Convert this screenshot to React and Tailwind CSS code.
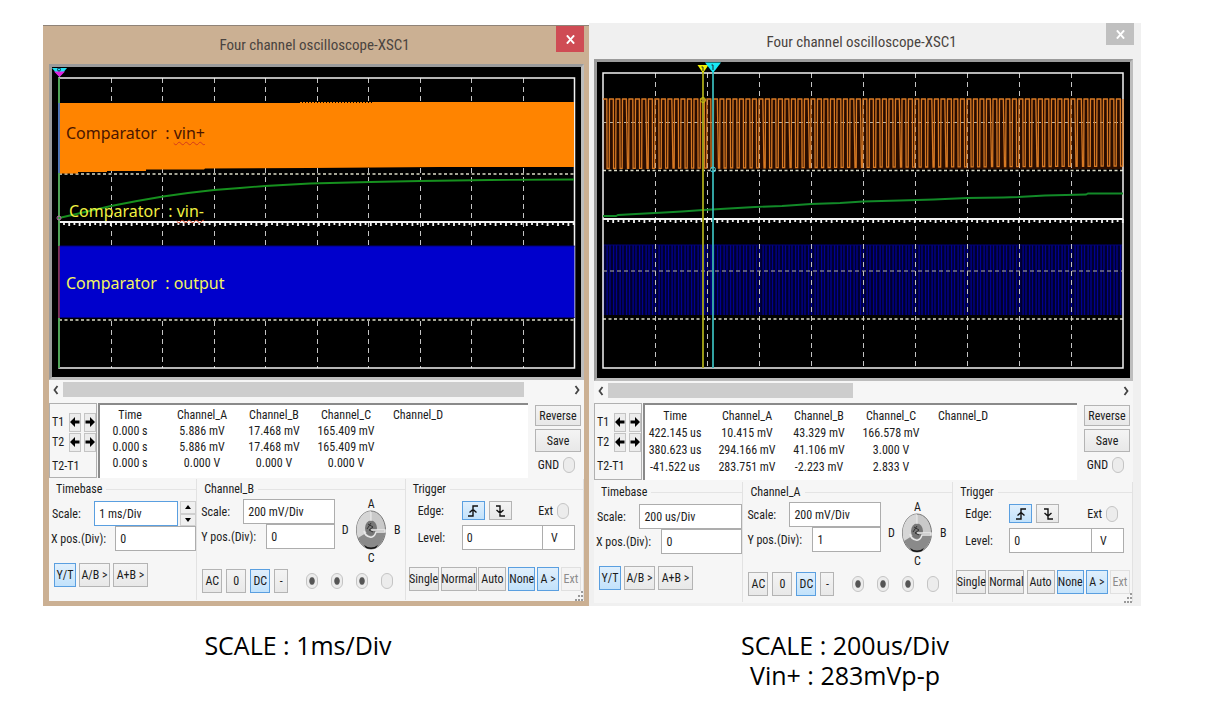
import React, { useId } from "react";

const UI = "font-['Roboto_Condensed','Open_Sans_Condensed','Noto_Sans_Condensed','Lato',sans-serif]";
const LABEL = "font-['Noto_Sans','Noto_Sans_CJK_KR',sans-serif]";
const CAPTION = "font-['Open_Sans','Noto_Sans_CJK_KR',sans-serif]";

function cx(...parts) {
  return parts.filter(Boolean).join(" ");
}

function Btn({ children, active, disabled, className, ...rest }) {
  return (
    <button
      type="button"
      disabled={disabled}
      className={cx(
        "flex h-6 shrink-0 items-center justify-center whitespace-nowrap border",
        active
          ? "border-[#5a9fe0] bg-linear-to-b from-[#e0effc] to-[#c2e2fb]"
          : disabled
            ? "border-[#e0e0e0] bg-[#f4f4f4] text-[#8c8c8c]"
            : "border-[#b4b4b4] bg-linear-to-b from-[#f4f4f4] to-[#e8e8e8]",
        className
      )}
      {...rest}
    >
      {children}
    </button>
  );
}

function Radio({ label, name, dot, className }) {
  return (
    <label className={cx("flex items-center gap-1", className)}>
      {label}
      <input
        type="radio"
        name={name}
        aria-label={label ? undefined : name}
        className={cx(
          "h-4 w-3 appearance-none rounded-full border border-[#c4c4c4]",
          dot
            ? "bg-[radial-gradient(ellipse_at_center,#555_0_32%,#ececec_45%)]"
            : "bg-[#ececec]"
        )}
      />
    </label>
  );
}

function Arrow({ left }) {
  return (
    <svg viewBox="0 0 10 12" className="h-3 w-[10px]" fill="#000">
      <path d={left ? "M0 6 5 1v3.5h4.5v3H5V11z" : "M10 6 5 1v3.5H.5v3H5V11z"} />
    </svg>
  );
}

function Edge({ falling }) {
  return (
    <svg viewBox="0 0 14 14" className="h-[14px] w-[14px]" fill="none" stroke="#111" strokeWidth="1.4">
      {falling ? (
        <path d="M3 2h4v10h5M3.500 6 7 9l3.500-3" />
      ) : (
        <path d="M2 12h5V2h5M3.500 8.500 7 5.500l3.500 3" />
      )}
    </svg>
  );
}

function Knob() {
  return (
    <svg viewBox="0 0 32 42" className="h-[42px] w-8">
      <ellipse cx="16" cy="21" rx="14.500" ry="19" fill="#c9c9c9" stroke="#777" />
      <path d="M16 2a14.500 19 0 0 0-13 27l13-8z" fill="#d6d6d6" />
      <path d="M3 29a14.500 19 0 0 0 27-4l1-4H16z" fill="#8a8a8a" />
      <path d="M9 36q7 5 14 0l-2 3q-5 2-10 0z" fill="#111" />
      <ellipse cx="16" cy="19" rx="6" ry="7.500" fill="#777" />
      <path d="M16 21h14v2H21q-2 6-6 5-5-1-6-6" fill="none" stroke="#e9e9e9" strokeWidth="1.500" />
      <path d="M13 15l5 3-4 3 4 2M12 20l4-6" stroke="#333" fill="none" />
      <path d="M16 3v9" stroke="#eee" />
    </svg>
  );
}

function Grip() {
  return (
    <svg viewBox="0 0 10 10" className="absolute right-0 bottom-0 h-[10px] w-[10px]" fill="#9a9a9a">
      <path d="M7 0h2v2H7zM4 4h2v2H4zM7 4h2v2H7zM1 8h2v2H1zM4 8h2v2H4zM7 8h2v2H7z" />
    </svg>
  );
}

function ticks(x0, x1, y) {
  let d = "";
  for (let i = 0, x = x0 + 5; x < x1; i++, x += 5.2) d += `M${x.toFixed(1)} ${y}v${i % 2 ? 4 : 3}`;
  return d;
}

function Grid({ x0, x1, y0, y1, mid, rows }) {
  const step = (x1 - x0) / 10;
  return (
    <g fill="none" stroke="#f2f2f2">
      {[1, 2, 3, 4, 5, 6, 7, 8, 9].map((i) => (
        <path key={i} d={`M${Math.round(x0 + i * step) + 0.5} ${y0}V${y1}`} strokeDasharray="5 4" stroke="#c4c4c4" />
      ))}
      {rows.map((y) => (
        <path key={y} d={`M${x0} ${y}H${x1}`} strokeDasharray="3 2.500" strokeWidth="1.300" stroke="#dcdcc8" />
      ))}
      <path d={`M${x0} ${mid}H${x1}`} strokeWidth="2" />
      <path d={ticks(x0, x1, mid)} strokeWidth="1.800" />
      <path d={`M${x0} ${y0}H${x1}V${y1}H${x0}z`} strokeWidth="1.500" />
    </g>
  );
}

function SlowTrace() {
  return (
    <svg viewBox="52 67 529 310" preserveAspectRatio="none" className="block h-[310px] w-full bg-black">
      <Grid x0={59} x1={574.5} y0={78} y1={368} mid={222} rows={[174, 320]} />
      <path d="M59 103H300V102H574V167H440L310 168 205 168.500 204 169.500H146V171H107V172H78V173.500H59z" fill="#ff8400" />
      <path d="M302 102.500H374" stroke="#000" strokeWidth="1" strokeDasharray="1 2" />
      <path d="M59 246H574.500V318H59z" fill="#0000cc" />
      <path d="M59 246H574.500M59 317.500H574.500" stroke="#00007a" />
      <path d="M59 218L85 212 111 206 137 201 163 196.500 188 193 214 190 240 188 265 186 310 183.500 370 182 420 181 490 180 574 179.500" fill="none" stroke="#16901e" strokeWidth="1.800" />
      <path d="M59 78V368" stroke="#2f9e3a" strokeWidth="1.500" />
      <path d="M59 103V173" stroke="#5068d8" strokeWidth="1.500" />
      <path d="M59 246V318" stroke="#8c1060" strokeWidth="1.500" />
      <path d="M52 68H67L59.500 77z" fill="#22e0f4" />
      <path d="M54 71.500H65L59.500 77z" fill="#e020e0" />
      <circle cx="59" cy="69.500" r="1.500" fill="none" stroke="#124" />
      <circle cx="59" cy="218" r="2" fill="none" stroke="#c070b0" />
    </svg>
  );
}

function squareWave() {
  let d = "M603 99";
  for (let i = 0; i < 80; i++) {
    const x = 603 + i * 6.5;
    const low = 168.5 - i * 0.03;
    const slant = i % 7 === 3 || i % 11 === 6 ? 1.2 : 0.3;
    d += `H${(x + 3.8).toFixed(1)}L${(x + 3.8 + slant).toFixed(1)} ${low.toFixed(1)}H${(x + 6.2).toFixed(1)}L${(x + 6.5).toFixed(1)} 99`;
  }
  return d;
}

function stripes() {
  let d = "";
  for (let i = 0; i < 80; i++) {
    const x = 603.5 + i * 6.5;
    d += `M${x.toFixed(1)} 245V315M${(x + 3.6).toFixed(1)} 245V315`;
  }
  return d;
}

function FastTrace() {
  return (
    <svg viewBox="597 62 533 316" preserveAspectRatio="none" className="block h-[316px] w-full bg-black">
      <path d="M603 99H1123V169H603z" fill="#2a0d00" />
      <path d="M603 245H1123V315H603z" fill="#00002c" />
      <path d={stripes()} stroke="#000090" strokeWidth="1.300" />
      <path d="M603 245H1123" stroke="#000078" />
      <Grid x0={603} x1={1123} y0={73} y1={368} mid={219} rows={[170.5, 319]} />
      <path d="M603 122.500H1123M603 271H1123" stroke="#b9b4a8" strokeDasharray="4 3" />
      <path d={squareWave()} fill="none" stroke="#d87a24" strokeWidth="1.300" />
      <path d="M603 216H616L618 215 636 214 655 213 682 211.500 703 210 755 207 782 206 811 204 840 203 863 201.500 900 200.500 934 199.500 967 198 1003 197.500 1018 197 1045 195.500 1086 194.500 1088 193.500H1123" fill="none" stroke="#128a28" strokeWidth="1.800" />
      <path d="M703 72V368" stroke="#a8a818" strokeWidth="1.800" />
      <path d="M713 72V368" stroke="#38b4b4" strokeWidth="1.800" />
      <path d="M697.500 65H708.500L703 73z" fill="#f2f200" />
      <path d="M705 62.500H721L713 73z" fill="#18e8f4" />
      <path d="M701.500 67H703V71M711.500 65H713V70" fill="none" stroke="#223" />
      <circle cx="703" cy="100" r="2.500" fill="none" stroke="#c0c010" />
      <circle cx="713" cy="169.500" r="2.500" fill="none" stroke="#40c8d8" />
    </svg>
  );
}

function Chevron({ left }) {
  return (
    <svg viewBox="0 0 6 10" className="h-[10px] w-[6px]" fill="none" stroke="#444" strokeWidth="1.800">
      <path d={left ? "M4.500 1 1.500 5l3 4" : "M1.500 1l3 4-3 4"} />
    </svg>
  );
}

function Field({ label, value, inputClass, className, spinner, focused }) {
  const id = useId();
  return (
    <div className={cx("flex h-[25px] items-center", className)}>
      <label htmlFor={id} className="min-w-0 flex-1 whitespace-nowrap">{label}</label>
      <input
        id={id}
        defaultValue={value}
        className={cx(
          "h-full shrink-0 border bg-white pl-1 outline-none",
          focused ? "border-[#5a9fe0]" : "border-[#adadad]",
          inputClass
        )}
      />
      {spinner && (
        <span className="flex h-full w-[18px] shrink-0 flex-col pl-[2px]">
          <button type="button" aria-label="Increase" className="flex flex-1 items-center justify-center border border-[#cfcfcf] bg-[#f0f0f0]">
            <svg viewBox="0 0 6 4" className="h-1 w-[6px]"><path d="M0 4 3 0l3 4z" /></svg>
          </button>
          <button type="button" aria-label="Decrease" className="flex flex-1 items-center justify-center border border-[#cfcfcf] bg-[#f0f0f0]">
            <svg viewBox="0 0 6 4" className="h-1 w-[6px]"><path d="M0 0 3 4l3-4z" /></svg>
          </button>
        </span>
      )}
    </div>
  );
}

const HEADS = ["Time", "Channel_A", "Channel_B", "Channel_C", "Channel_D"];

function Readout({ rows, roomy }) {
  return (
    <div className={cx("flex", roomy ? "mt-[5px] h-[77px]" : "mt-[6px] h-[75px]")}>
      <div className="flex w-12 shrink-0 flex-col border border-[#b0b0b0] pt-2 pl-[2px] leading-[16px]">
        {["T1", "T2"].map((t) => (
          <div key={t} className="flex h-5 items-center gap-[3px]">
            <span className="w-[15px]">{t}</span>
            <button type="button" aria-label={`${t} left`} className="flex h-[19px] w-3 items-center justify-center border border-[#c4c4c4] bg-[#ececec]">
              <Arrow left />
            </button>
            <button type="button" aria-label={`${t} right`} className="flex h-[19px] w-3 items-center justify-center border border-[#c4c4c4] bg-[#ececec]">
              <Arrow />
            </button>
          </div>
        ))}
        <span className="mt-[6px]">T2-T1</span>
      </div>
      <div className="ml-px min-w-0 flex-1 border-t-2 border-l-2 border-[#8a8a8a] bg-white pt-[2px]">
        <table className="w-[354px] table-fixed border-collapse text-center">
          <colgroup>
            <col className="w-[66px]" />
            <col /><col /><col /><col />
          </colgroup>
          <thead>
            <tr className={roomy ? "h-[17px]" : "h-4"}>
              {HEADS.map((h) => (
                <th key={h} scope="col" className="p-0 leading-[16px] font-normal first:pr-[6px]">{h}</th>
              ))}
            </tr>
          </thead>
          <tbody>
            {rows.map((r, i) => (
              <tr key={i} className={roomy ? "h-[17px]" : "h-4"}>
                {r.map((c, j) => (
                  <td key={j} className="p-0 leading-[16px] first:pr-[6px]">{c}</td>
                ))}
                <td className="p-0" />
              </tr>
            ))}
          </tbody>
        </table>
      </div>
      <div className="flex w-[56px] shrink-0 flex-col items-end gap-[3px] pt-[2px] pr-[3px]">
        <Btn className="h-[21px] w-[46px]">Reverse</Btn>
        <Btn className="h-[23px] w-[46px]">Save</Btn>
        <Radio label="GND" name="gnd" className="mt-px pr-[6px]" />
      </div>
    </div>
  );
}

function Group({ title, children }) {
  return (
    <section className="min-w-0 border-r border-[#e2e2e2]">
      <h2 className="flex h-5 items-center gap-1 pl-[7px] leading-[20px]">
        {title}
        <span className="h-px flex-1 bg-[#e4e4e4]" />
      </h2>
      {children}
    </section>
  );
}

function Controls({ roomy, channel, timeScale, yPos, id }) {
  return (
    <div className={cx("grid grid-cols-[148fr_208fr_178fr]", roomy ? "mt-[2px] h-[120px]" : "mt-px h-[121px]")}>
      <Group title="Timebase">
        <Field label="Scale:" value={timeScale} spinner={!roomy} focused={!roomy} inputClass={roomy ? "w-[103px]" : "w-[84px]"} className="mt-[2px] pl-[3px]" />
        <Field label="X pos.(Div):" value="0" inputClass="w-[81px]" className="pl-[2px]" />
        <div className="mt-3 flex gap-[3px] pl-[5px]">
          <Btn active className="w-[22px]">Y/T</Btn>
          <Btn className="w-[31px]">A/B &gt;</Btn>
          <Btn className="w-[35px]">A+B &gt;</Btn>
        </div>
      </Group>
      <Group title={channel}>
        <div className="flex">
          <div className="w-[138px] shrink-0">
            <Field label="Scale:" value="200 mV/Div" inputClass="w-[92px]" className="pl-[4px]" />
            <Field label="Y pos.(Div):" value={yPos} inputClass="w-[69px]" className="pl-[4px]" />
          </div>
          <div className="grid grid-cols-[16px_36px_16px] place-items-center pl-[2px] leading-[14px]">
            <span className="col-start-2 h-[10px] leading-[10px]">A</span>
            <span className="col-start-1">D</span>
            <Knob />
            <span>B</span>
            <span className="col-start-2">C</span>
          </div>
        </div>
        <div className="mt-1 flex items-center gap-1 pl-[5px]">
          <Btn className="w-5">AC</Btn>
          <Btn className="w-5">0</Btn>
          <Btn active className="w-5">DC</Btn>
          <Btn className="w-[14px]">-</Btn>
          <div className="flex gap-[13px] pl-[14px]">
            <Radio name={`${id}-a`} dot />
            <Radio name={`${id}-b`} dot />
            <Radio name={`${id}-c`} dot />
            <Radio name={`${id}-d`} />
          </div>
        </div>
      </Group>
      <Group title="Trigger">
        <div className="flex h-[22px] items-center pt-px pl-3">
          <span className="w-11">Edge:</span>
          <Btn active aria-label="Rising edge" className="h-[19px] w-[23px]"><Edge /></Btn>
          <Btn aria-label="Falling edge" className="ml-1 h-[19px] w-[23px]"><Edge falling /></Btn>
          <Radio label="Ext" name={`${id}-ext`} className="mr-[14px] ml-auto" />
        </div>
        <div className="mt-1 flex h-[25px] items-center pr-2 pl-3">
          <label htmlFor={`${id}-level`} className="w-11">Level:</label>
          <input id={`${id}-level`} defaultValue="0" className="h-full min-w-0 flex-1 border border-[#adadad] bg-white pl-1" />
          <span className="flex h-full w-8 items-center border border-l-0 border-[#adadad] bg-white pl-2">V</span>
        </div>
        <div className="mt-[17px] flex justify-between pr-[2px] pl-[3px]">
          <Btn className="w-[30px]">Single</Btn>
          <Btn className="w-[36px]">Normal</Btn>
          <Btn className="w-[28px]">Auto</Btn>
          <Btn active className="w-[27px]">None</Btn>
          <Btn active className="w-[22px]">A &gt;</Btn>
          <Btn disabled className="w-[20px]">Ext</Btn>
        </div>
      </Group>
    </div>
  );
}

function Scope({ roomy, frame, title, close, bezel, trace, thumb, children, ...controls }) {
  return (
    <section className={frame}>
      <header className={cx("relative flex justify-center", title)}>
        <h1 className="pt-[9px] pr-1 text-[15px] leading-[20px] text-[#4a4440]">Four channel oscilloscope-XSC1</h1>
        <button type="button" aria-label="Close" className={cx("absolute top-0 flex w-7 items-center justify-center text-white", close)}>
          <svg viewBox="0 0 10 10" className="h-[9px] w-[9px]" stroke="currentColor" strokeWidth="2.200"><path d="M1 0.500 9 9.500M9 0.500 1 9.500" /></svg>
        </button>
      </header>
      <div className="relative bg-[#f6f6f6] text-[12px] text-[#1c1c1c]">
        <div className={cx("relative border-[3px] border-[#9b9b9b] border-r-[#bdbdbd] border-b-[#bdbdbd]", bezel)}>
          {trace}
          {children}
        </div>
        <div className="mt-[2px] flex h-[15px] items-center gap-1 px-1">
          <Chevron left />
          <div className="flex h-full flex-1"><div className={cx("h-full bg-[#cdcdcd]", thumb)} /></div>
          <Chevron />
        </div>
        <div className="pb-px">
          <Readout rows={controls.rows} roomy={roomy} />
          <Controls roomy={roomy} {...controls} />
        </div>
        <Grip />
      </div>
    </section>
  );
}

function Wavy({ children }) {
  return <span className="underline decoration-[#d43a1a] decoration-wavy decoration-1 underline-offset-2">{children}</span>;
}

export default function App() {
  return (
    <main className={cx("min-h-screen bg-white pt-[23px] pr-[69px] pl-[43px]", UI)}>
      <div className="grid grid-cols-[546fr_552fr] items-start">
        <Scope
          id="slow"
          frame="mt-[2px] border-t border-[#8f8378] bg-[#cbb093] pr-[5px] pb-[5px] pl-[6px]"
          title="h-[38px]"
          close="right-0 h-[26px] bg-[#cf4c54]"
          bezel="h-[316px]"
          trace={<SlowTrace />}
          thumb="w-[91%]"
          channel="Channel_B"
          timeScale="1 ms/Div"
          yPos="0"
          rows={[
            ["0.000 s", "5.886 mV", "17.468 mV", "165.409 mV"],
            ["0.000 s", "5.886 mV", "17.468 mV", "165.409 mV"],
            ["0.000 s", "0.000 V", "0.000 V", "0.000 V"],
          ]}
        >
          <p className={cx("absolute top-[55px] left-[14px] text-[16px] leading-[22px] text-[#4a1500]", LABEL)}>Comparator&nbsp; : <Wavy>vin+</Wavy></p>
          <p className={cx("absolute top-[133px] left-[17px] text-[16px] leading-[22px] text-[#f0f040]", LABEL)}>Comparator&nbsp; : <Wavy>vin-</Wavy></p>
          <p className={cx("absolute top-[205px] left-[14px] text-[16px] leading-[22px] text-[#f4f460]", LABEL)}>Comparator&nbsp; : output</p>
        </Scope>
        <Scope
          id="fast"
          roomy
          frame="bg-[#f0f0f0] pr-2 pb-[3px] pl-[5px]"
          title="h-[36px]"
          close="right-[-1px] h-[22px] bg-[#c0c0c0]"
          bezel="h-[322px]"
          trace={<FastTrace />}
          thumb="w-[48%]"
          channel="Channel_A"
          timeScale="200 us/Div"
          yPos="1"
          rows={[
            ["422.145 us", "10.415 mV", "43.329 mV", "166.578 mV"],
            ["380.623 us", "294.166 mV", "41.106 mV", "3.000 V"],
            ["-41.522 us", "283.751 mV", "-2.223 mV", "2.833 V"],
          ]}
        />
      </div>
      <div className={cx("mt-[24px] grid grid-cols-[510fr_588fr] text-center text-[25px] leading-[30px] text-black", CAPTION)}>
        <p>SCALE : 1ms/Div</p>
        <div className="pr-1">
          <p>SCALE : 200us/Div</p>
          <p>Vin+ : 283mVp-p</p>
        </div>
      </div>
    </main>
  );
}
